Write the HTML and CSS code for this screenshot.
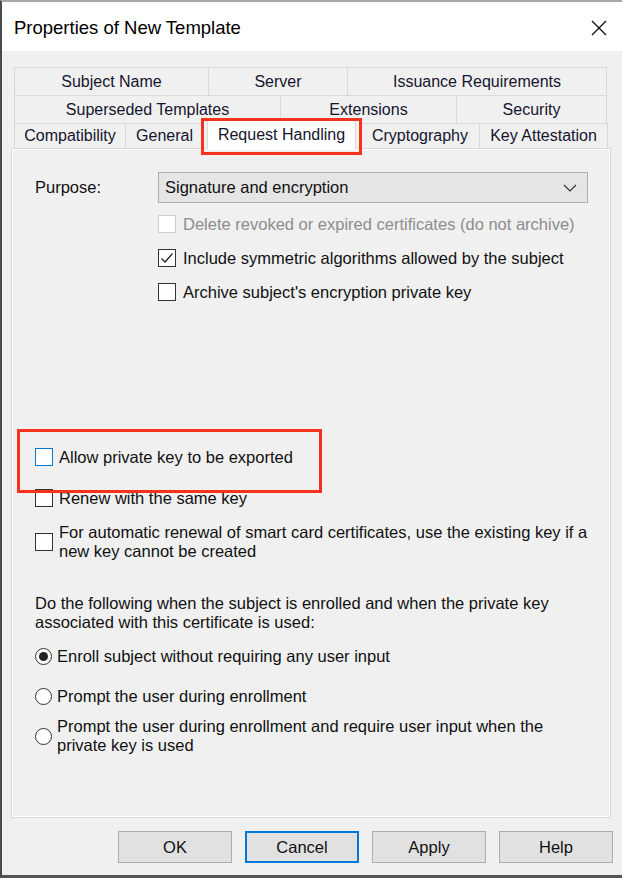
FILE: index.html
```html
<!DOCTYPE html>
<html lang="en">
<head>
    <meta charset="UTF-8">
    <meta name="viewport" content="width=device-width, initial-scale=1.0">
    <title>Properties of New Template</title>
    <link rel="stylesheet" href="styles.css">
</head>
<body>
    <div class="window">
        <div class="titlebar">
            <span class="title">Properties of New Template</span>
            <svg class="close" width="16" height="16" viewBox="0 0 16 16">
                <path d="M1 1 L15 15 M15 1 L1 15" stroke="#111" stroke-width="1.4" fill="none"/>
            </svg>
        </div>
        <div class="content">
            <div class="tabs">
                <div class="tab-row row1">
                    <div class="tab">Subject Name</div>
                    <div class="tab">Server</div>
                    <div class="tab">Issuance Requirements</div>
                </div>
                <div class="tab-row row2">
                    <div class="tab">Superseded Templates</div>
                    <div class="tab">Extensions</div>
                    <div class="tab">Security</div>
                </div>
                <div class="tab-row row3">
                    <div class="tab">Compatibility</div>
                    <div class="tab">General</div>
                    <div class="tab selected">Request Handling</div>
                    <div class="tab">Cryptography</div>
                    <div class="tab">Key Attestation</div>
                </div>
            </div>

            <div class="panel">
                <div class="purpose-row">
                    <label class="purpose-label">Purpose:</label>
                    <div class="select">
                        <span>Signature and encryption</span>
                        <svg width="14" height="8" viewBox="0 0 14 8">
                            <path d="M1 1 L7 7 L13 1" stroke="#333" stroke-width="1.2" fill="none"/>
                        </svg>
                    </div>
                </div>

                <div class="top-options">
                    <div class="check disabled"><span class="box"></span>Delete revoked or expired certificates (do not archive)</div>
                    <div class="check"><span class="box checked">
                        <svg width="16" height="16" viewBox="0 0 16 16"><path d="M2.5 8.5 L6 12 L13.5 3.5" stroke="#222" stroke-width="1.3" fill="none"/></svg>
                    </span>Include symmetric algorithms allowed by the subject</div>
                    <div class="check"><span class="box"></span>Archive subject's encryption private key</div>
                </div>

                <div class="key-options">
                    <div class="check highlighted"><span class="box focus"></span>Allow private key to be exported</div>
                    <div class="check renew"><span class="box"></span>Renew with the same key</div>
                    <div class="check multi"><span class="box"></span>For automatic renewal of smart card certificates, use the existing key if a<br>new key cannot be created</div>
                </div>

                <p class="enroll-text">Do the following when the subject is enrolled and when the private key<br>associated with this certificate is used:</p>

                <div class="radios">
                    <div class="radio"><span class="dot on"></span>Enroll subject without requiring any user input</div>
                    <div class="radio"><span class="dot"></span>Prompt the user during enrollment</div>
                    <div class="radio multi"><span class="dot"></span>Prompt the user during enrollment and require user input when the<br>private key is used</div>
                </div>
            </div>

            <div class="buttons">
                <button class="btn">OK</button>
                <button class="btn default">Cancel</button>
                <button class="btn">Apply</button>
                <button class="btn">Help</button>
            </div>
        </div>
    </div>
</body>
</html>
```

FILE: styles.css
```css
body {
    margin: 0;
    padding: 0;
    font-family: "Liberation Sans", Arial, sans-serif;
    font-size: 16.5px;
    color: #111;
    background-color: #f0f0f0;
}
.window {
    width: 620px;
    height: 873px;
    border-left: 2px solid #4a4a4a;
    border-top: 2px solid #a8a8a8;
    border-bottom: 3px solid #555;
    background-color: #f0f0f0;
    display: flex;
    flex-direction: column;
}
.titlebar {
    height: 49px;
    box-sizing: border-box;
    background-color: #fff;
    display: flex;
    align-items: center;
    justify-content: space-between;
    padding: 3px 15px 0 12px;
}
.title {
    font-size: 18.5px;
    color: #000;
}
.content {
    padding: 16px 9px 0 9px;
}
.tabs {
    margin-left: 3px;
    width: 594px;
    font-size: 16px;
}
.tab-row {
    display: grid;
    height: 28px;
}
.row1 {
    grid-template-columns: 194px 139px 260px;
}
.row2 {
    grid-template-columns: 266px 176px 151px;
}
.row3 {
    grid-template-columns: 111px 78px 157px 119px 129px;
    height: 25px;
}
.tab {
    border: 1px solid #d9d9d9;
    border-right: none;
    border-bottom: none;
    display: flex;
    align-items: center;
    justify-content: center;
    color: #15152e;
    white-space: nowrap;
}
.tab:last-child {
    border-right: 1px solid #d9d9d9;
}
.tab.selected {
    position: relative;
    background-color: #fff;
    margin: -3px 4px -1px 4px;
    border-right: 1px solid #d9d9d9;
    z-index: 2;
}
.tab.selected::after {
    content: "";
    position: absolute;
    left: -7px;
    right: -7px;
    top: -3px;
    bottom: -6px;
    border: 3px solid #f5321e;
}
.panel {
    position: relative;
    width: 600px;
    height: 670px;
    border: 1px solid #d9d9d9;
    box-shadow: inset 1px 1px 0 #fff, inset -1px -1px 0 #fff;
    padding: 23px 0 0 23px;
    box-sizing: border-box;
}
.purpose-row {
    display: flex;
    align-items: center;
    height: 31px;
}
.purpose-label {
    width: 123px;
}
.select {
    width: 430px;
    height: 31px;
    box-sizing: border-box;
    background-color: #e5e5e5;
    border: 1px solid #adadad;
    display: flex;
    align-items: center;
    justify-content: space-between;
    padding: 0 6px 0 6px;
}
.select svg {
    margin-right: 4px;
}
.top-options {
    margin: 4px 0 0 123px;
}
.check {
    display: flex;
    align-items: center;
    height: 34px;
    white-space: nowrap;
}
.box {
    width: 16px;
    height: 16px;
    border: 1px solid #333;
    background-color: #fff;
    margin-right: 7px;
    flex-shrink: 0;
    display: flex;
    align-items: center;
    justify-content: center;
}
.check.disabled {
    color: #8d8d8d;
}
.check.disabled .box {
    border-color: #cccccc;
}
.box.focus {
    border-color: #0078d7;
}
.key-options {
    margin: 131px 0 0 0;
}
.check.highlighted {
    position: relative;
}
.check.highlighted::after {
    content: "";
    position: absolute;
    left: -18px;
    top: -11px;
    width: 299px;
    height: 58px;
    border: 3px solid #f5321e;
}
.check.renew {
    margin-top: 7px;
}
.check.multi {
    height: 38px;
    line-height: 19px;
    margin-top: 8px;
}
.key-options .box {
    margin-right: 6px;
}
.enroll-text {
    margin: 33px 0 0 0;
    line-height: 19px;
}
.radio {
    display: flex;
    align-items: center;
    height: 34px;
    margin-top: 6px;
    white-space: nowrap;
}
.radio:first-child {
    margin-top: 7px;
}
.radio.multi {
    height: 38px;
    line-height: 19px;
    margin-top: 4px;
}
.dot {
    width: 15px;
    height: 15px;
    border: 1px solid #333;
    border-radius: 50%;
    background-color: #fff;
    margin-right: 5px;
    flex-shrink: 0;
    display: flex;
    align-items: center;
    justify-content: center;
}
.dot.on::after {
    content: "";
    width: 9px;
    height: 9px;
    border-radius: 50%;
    background-color: #222;
}
.buttons {
    display: flex;
    justify-content: flex-end;
    gap: 13px;
    margin-top: 13px;
}
.btn {
    width: 114px;
    height: 32px;
    font-family: "Liberation Sans", Arial, sans-serif;
    font-size: 16.5px;
    color: #111;
    background-color: #e1e1e1;
    border: 1px solid #adadad;
}
.btn.default {
    border: 2px solid #0078d7;
}
```
